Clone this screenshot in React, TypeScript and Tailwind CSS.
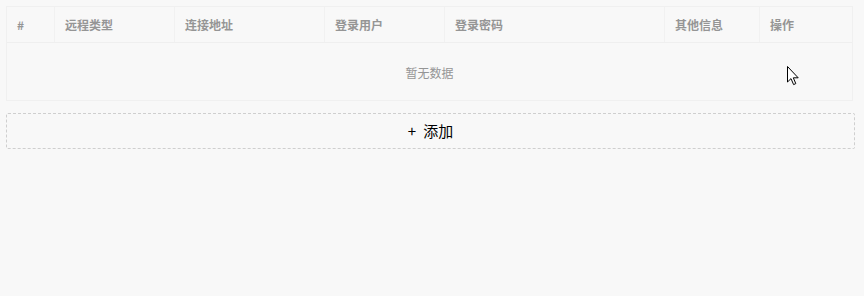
const columns = [
  { key: "idx", label: "#", width: "w-[48px]" },
  { key: "type", label: "远程类型", width: "w-[120px]" },
  { key: "addr", label: "连接地址", width: "w-[150px]" },
  { key: "user", label: "登录用户", width: "w-[120px]" },
  { key: "pwd", label: "登录密码", width: "w-[220px]" },
  { key: "extra", label: "其他信息", width: "w-[95px]" },
  { key: "ops", label: "操作", width: "flex-1" },
];

function Cursor() {
  return (
    <svg
      className="pointer-events-none absolute left-[787px] top-[66px]"
      width="13"
      height="20"
      viewBox="0 0 13 20"
    >
      <path
        d="M0.5 0.5 L0.5 16 L4 12.6 L6.6 18.6 L8.8 17.6 L6.3 11.8 L11.2 11.8 Z"
        fill="#fff"
        stroke="#000"
        strokeWidth="1"
        strokeLinejoin="miter"
      />
    </svg>
  );
}

export default function App() {
  return (
    <div
      className="relative min-h-[296px] w-full bg-[#f8f8f8] px-[6px] pt-[6px]"
      style={{ fontFamily: '"Noto Sans CJK SC", "Liberation Sans", sans-serif' }}
    >
      <div className="mr-[5px] border border-[#f0f0f0]">
        {/* header */}
        <div className="flex h-[36px] border-b border-[#efefef]">
          {columns.map((c, i) => (
            <div
              key={c.key}
              className={`${c.width} flex items-center px-[10px] text-[12px] font-semibold text-[#959595] ${
                i < columns.length - 1 ? "border-r border-[#f1f1f1]" : ""
              }`}
            >
              {c.label}
            </div>
          ))}
        </div>
        {/* empty body */}
        <div className="flex h-[57px] items-center justify-center pt-[3px] text-[12px] text-[#959595]">
          暂无数据
        </div>
      </div>

      <button
        type="button"
        className="mt-[12px] flex h-[36px] w-[849px] items-center justify-center rounded-[2px] border border-dashed border-[#cfcfcf] pt-[1px] text-[15px] text-black"
      >
        <span className="mr-[7px]">+</span>
        添加
      </button>

      <Cursor />
    </div>
  );
}
